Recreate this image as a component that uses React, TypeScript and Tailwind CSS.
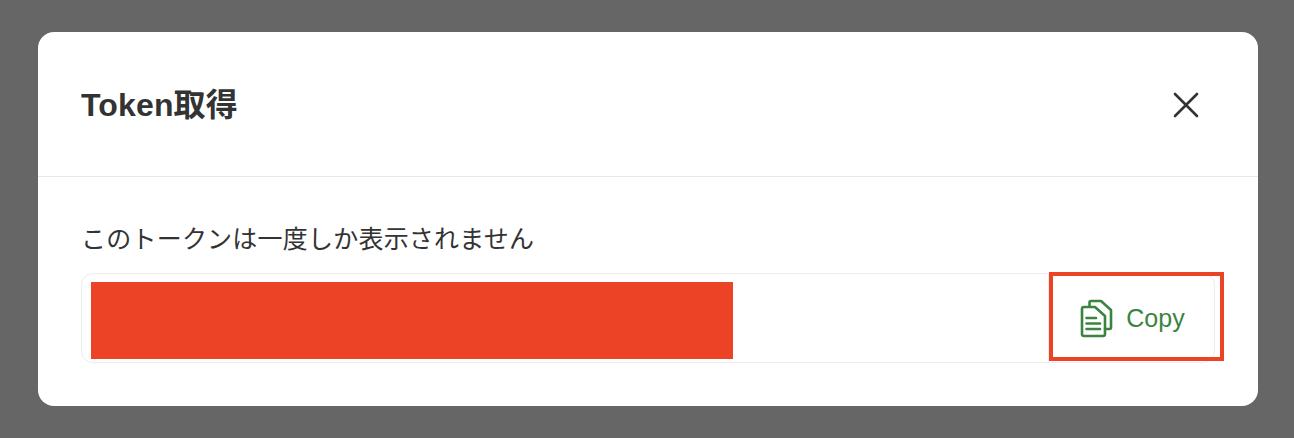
export default function App() {
  return (
    <div className="h-[438px] w-[1294px] bg-[#666666] pl-[38px] pt-8 font-['Liberation_Sans','Noto_Sans_CJK_JP',sans-serif] text-[#333333]">
      <div className="h-[374px] w-[1220px] rounded-2xl bg-white">
        <div className="flex h-[145px] items-center justify-between border-b border-[#e8e8e8] pl-[43px] pr-[56px] pt-[2px]">
          <h1 className="text-[32px] leading-none font-bold tracking-[0.15px]">Token取得</h1>
          <button className="text-[#333333]">
            <svg width="32" height="32" viewBox="0 0 32 32" fill="none" stroke="currentColor" strokeWidth="2.6" strokeLinecap="round" className="block">
              <path d="M5 5 L27 27 M27 5 L5 27" />
            </svg>
          </button>
        </div>
        <div className="pl-[43px] pr-[43px] pt-[45px]">
          <p className="text-[25px] leading-[34px] tracking-[0.22px]">このトークンは一度しか表示されません</p>
          <div className="relative mt-[17px] flex h-[90px] items-center justify-between rounded-xl border border-[#ececec] pl-[9px]">
            <div className="mt-[5px] h-[77px] w-[642px] bg-[#ec4226]" />
            <button className="flex h-full w-[166px] items-center justify-center gap-[13px] rounded-r-xl border-l border-[#ececec] pl-[2px] text-[#3a8440]">
              <svg width="33" height="39" viewBox="0 0 33 39" fill="none" stroke="currentColor" strokeWidth="2.6" strokeLinejoin="round" strokeLinecap="round" className="block">
                <path d="M9.5 7 V3.5 Q9.5 2 11 2 H21 L31 11 V28.5 Q31 30 29.5 30 H25" />
                <path d="M4 8 H15 L25 17 V35 Q25 37 23 37 H4 Q2 37 2 35 V10 Q2 8 4 8 Z" />
                <path d="M6.5 19 H16 M6.5 24.5 H20 M6.5 30 H20" />
              </svg>
              <span className="text-[25px] leading-none">Copy</span>
            </button>
            <div className="absolute left-[967px] top-[-2px] h-[89px] w-[175px] border-[4px] border-[#ec4226]" />
          </div>
        </div>
      </div>
    </div>
  );
}
